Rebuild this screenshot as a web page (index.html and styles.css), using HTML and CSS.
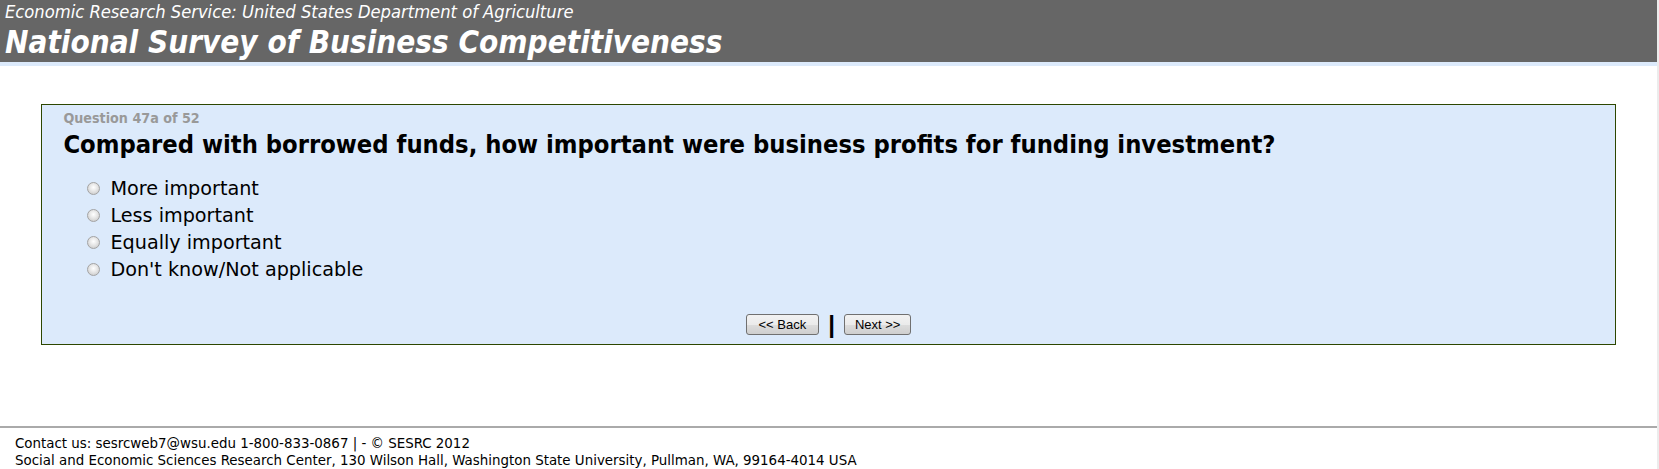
FILE: index.html
```html
<!DOCTYPE html>
<html lang="en">
<head>
<meta charset="utf-8">
<title>National Survey of Business Competitiveness</title>
<link rel="stylesheet" href="styles.css">
</head>
<body>
<div class="page">
  <header class="header">
    <div class="agency">Economic Research Service: United States Department of Agriculture</div>
    <div class="title">National Survey of Business Competitiveness</div>
  </header>
  <main class="main">
    <form class="qbox">
      <div class="qnum">Question 47a of 52</div>
      <div class="qtext">Compared with borrowed funds, how important were business profits for funding investment?</div>
      <ul class="options">
        <li><label><input type="radio" name="q47a"><span>More important</span></label></li>
        <li><label><input type="radio" name="q47a"><span>Less important</span></label></li>
        <li><label><input type="radio" name="q47a"><span>Equally important</span></label></li>
        <li><label><input type="radio" name="q47a"><span>Don't know/Not applicable</span></label></li>
      </ul>
      <div class="nav">
        <button type="button" class="btn btn-back">&lt;&lt; Back</button>
        <span class="sep">|</span>
        <button type="button" class="btn btn-next">Next &gt;&gt;</button>
      </div>
    </form>
  </main>
  <footer class="footer">
    <div>Contact us: sesrcweb7@wsu.edu 1-800-833-0867 | - © SESRC 2012</div>
    <div>Social and Economic Sciences Research Center, 130 Wilson Hall, Washington State University, Pullman, WA, 99164-4014 USA</div>
  </footer>
</div>
</body>
</html>
```
FILE: styles.css
```css
html, body {
  margin: 0;
  padding: 0;
  background: #ffffff;
}
body {
  border-right: 2px solid #ececec;
  height: 469px;
  box-sizing: border-box;
  overflow: hidden;
}
.page {
  font-family: "DejaVu Sans Condensed", "DejaVu Sans", sans-serif;
  color: #000;
}
.header {
  background: #666666;
  color: #ffffff;
  height: 62px;
  border-bottom: 4px solid #dceafb;
  padding-left: 5px;
  box-sizing: content-box;
}
.agency {
  font-style: italic;
  font-size: 18.2px;
  line-height: 23px;
}
.title {
  font-style: italic;
  font-weight: bold;
  font-size: 31.2px;
  line-height: 38px;
}
.main {
  padding-top: 38px;
}
.qbox {
  width: 95%;
  margin: 0 auto;
  box-sizing: border-box;
  border: 1px solid #2d4700;
  background: #dceafb;
  height: 241px;
  padding: 5px 21px 0;
  display: flex;
  flex-direction: column;
}
.qnum {
  font-weight: bold;
  font-size: 14.2px;
  color: #999999;
  line-height: 16px;
}
.qtext {
  font-weight: bold;
  font-size: 25.3px;
  line-height: 30px;
  margin-top: 4px;
}
.options {
  list-style: none;
  margin: 15px 0 0;
  padding: 0 0 0 24px;
  font-family: "DejaVu Sans", sans-serif;
  font-size: 19.2px;
}
.options li {
  height: 27px;
  line-height: 27px;
}
.options label {
  display: flex;
  align-items: center;
  gap: 10px;
}
.options input {
  appearance: none;
  -webkit-appearance: none;
  width: 13px;
  height: 13px;
  margin: 0;
  border: 1px solid #a3a3a3;
  border-radius: 50%;
  background: radial-gradient(circle at 50% 40%, #ffffff 0%, #e6e6e6 45%, #c2c2c2 100%);
  box-sizing: border-box;
}
.nav {
  margin-top: 31px;
  display: flex;
  justify-content: center;
  align-items: center;
  gap: 9px;
}
.btn {
  font-family: "Liberation Sans", Arial, sans-serif;
  font-size: 13px;
  color: #000;
  height: 21px;
  padding: 0 11px;
  border: 1px solid #707070;
  border-radius: 3px;
  background: linear-gradient(#f2f2f2 0%, #ebebeb 50%, #dddddd 51%, #cfcfcf 100%);
}
.btn-back {
  padding: 0 12px;
}
.btn-next {
  padding: 0 10px;
}
.sep {
  font-family: "Liberation Sans", Arial, sans-serif;
  font-weight: bold;
  font-size: 24px;
  line-height: 21px;
}
.footer {
  margin-top: 81px;
  border-top: 2px solid #aaaaaa;
  padding: 7px 0 0 15px;
  font-size: 14.9px;
  line-height: 17px;
}
```
